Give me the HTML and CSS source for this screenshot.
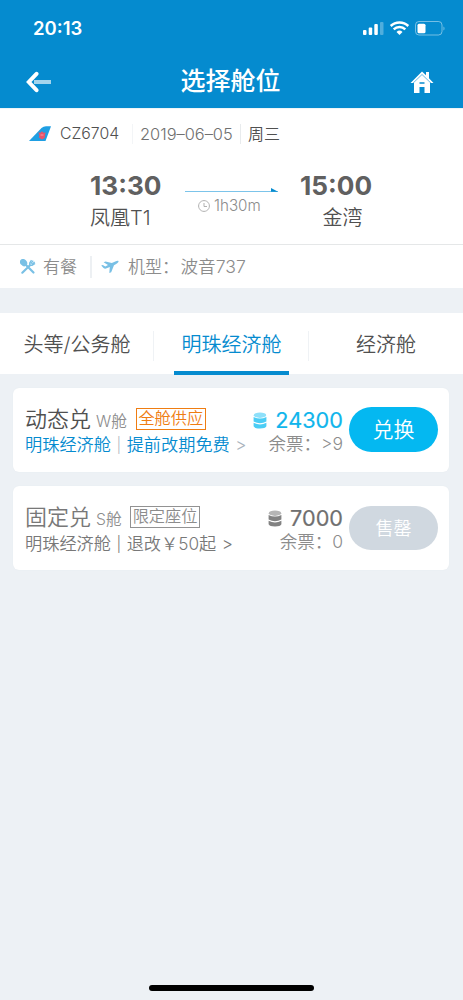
FILE: index.html
```html
<!DOCTYPE html>
<html lang="zh-CN">
<head>
<meta charset="utf-8">
<meta name="viewport" content="width=device-width, initial-scale=1">
<title>选择舱位</title>
<link rel="stylesheet" href="styles.css">
</head>
<body>
<div class="screen">
  <header class="header">
    <div class="status">
      <span class="clock">20:13</span>
      <svg class="status-icons" width="84" height="18" viewBox="0 0 84 18">
        <g fill="#fff">
          <rect x="1" y="11" width="3.500" height="5" rx="1"/>
          <rect x="6.700" y="8.500" width="3.500" height="7.500" rx="1"/>
          <rect x="12.300" y="5" width="3.500" height="11" rx="1"/>
          <rect x="18" y="3" width="3.500" height="13" rx="1" opacity=".3"/>
          <path d="M37.500 16l-3-3a4.300 4.300 0 0 1 6 0z"/>
          <rect x="55.500" y="4.700" width="8" height="9.500" rx="1.500"/>
          <path d="M81.500 7.500c1.300.6 1.300 3.400 0 4z" opacity=".5"/>
        </g>
        <path d="M28.700 7a12.500 12.500 0 0 1 17.600 0M31.700 10.300a8.300 8.300 0 0 1 11.600 0" fill="none" stroke="#fff" stroke-width="2.500"/>
        <rect x="53.500" y="2.500" width="26.500" height="13.500" rx="3.500" fill="none" stroke="#fff" stroke-opacity=".45"/>
      </svg>
    </div>
    <div class="nav">
      <svg class="nav-back" width="26" height="22" viewBox="0 0 26 22">
        <path d="M9 11h17" stroke="#a3d4ed" stroke-width="4"/>
        <path d="M11.500 2.800L3.800 11l7.700 8.200" fill="none" stroke="#fff" stroke-width="4" stroke-linecap="round" stroke-linejoin="miter"/>
      </svg>
      <h1 class="title">选择舱位</h1>
      <svg class="nav-home" width="24" height="24" viewBox="0 0 24 24">
        <path d="M.5 13L12 1.500l4 3.800V2h3v6.200l4.500 4.800z" fill="#fff"/>
        <path d="M4 12.600L12 5l8 7.600V23h-5.500v-6h-5v6H4z" fill="#fff"/>
        <path d="M3 13.200l9-8.700 9 8.700" fill="none" stroke="#058bcf" stroke-width=".6"/>
        <path d="M9.500 12h5v2h-5z" fill="#058bcf" opacity=".75"/>
      </svg>
    </div>
  </header>

  <section class="flight">
    <div class="flight-meta">
      <svg class="tail" width="23" height="16" viewBox="0 0 23 16">
        <path d="M0 15L12.500 2Q14.500.3 17 .3h5L16.500 15z" fill="#1f9fe3"/>
        <path d="M9.300 6.500l2.200.3L13 5.300l1.500 1.500 2.200-.3-.8 2.700.2 2-2.300 2h-1.700l-2.200-2 .6-2z" fill="#e9536a"/>
        <path d="M11.500 9h3" stroke="#f8bac3" stroke-width=".7"/>
      </svg>
      <span class="flight-no">CZ6704</span>
      <span class="flight-date">2019–06–05</span>
      <span class="flight-day">周三</span>
    </div>
    <div class="route">
      <div class="stop stop-from"><b class="time">13:30</b><span class="place">凤凰T1</span></div>
      <div class="leg">
        <svg class="leg-line" width="94" height="6" viewBox="0 0 94 6"><rect y="4" width="93" height="1" fill="#7cc4ea"/><path d="M86 1l7 3.700h-7z" fill="#058bcf"/></svg>
        <div class="duration">
          <svg width="12" height="12" viewBox="0 0 12 12"><path d="M6 3v3.500h3M6 .6a5.400 5.400 0 1 0 .01 0z" fill="none" stroke="#a8a8a8" stroke-width=".9"/></svg>
          <span>1h30m</span>
        </div>
      </div>
      <div class="stop stop-to"><b class="time">15:00</b><span class="place">金湾</span></div>
    </div>
    <div class="amenities">
      <svg class="meal-icon" width="16" height="16" viewBox="0 0 16 16" fill="none" stroke="#79c0e5">
        <path d="M5 5l8.500 8.500M2.300 13.700L10 6.300" stroke-width="2.200" stroke-linecap="round"/>
        <ellipse cx="3.600" cy="3.600" rx="3.900" ry="3.200" transform="rotate(45 3.600 3.600)" fill="#79c0e5" stroke="none"/>
        <path d="M11.500 1.200L9.700 4v2.400h2.400l3-1.900M13.200 1.700l-2.500 3M14.700 3l-3 2.500" stroke-width="1.300"/>
      </svg>
      <span class="meal">有餐</span>
      <svg class="plane-icon" width="18" height="14" viewBox="0 0 18 14"><path d="M.2 5.500l1.600-.5 2.500 1.400 2.700-1.300L2.600 2.300l2-.9 6.200 1.700C14 1.500 16.500.3 17.400 1c.8.9-1.400 2.600-4.400 4.200L10.200 12.300l-1.900.8.500-6-3.800 1.500q-1.500.4-2.500-.6z" fill="#79c0e5"/></svg>
      <span class="aircraft">机型：<span class="model">波音737</span></span>
    </div>
  </section>

  <nav class="tabs">
    <a class="tab">头等/公务舱</a>
    <a class="tab tab-active"><span>明珠经济舱</span></a>
    <a class="tab">经济舱</a>
  </nav>

  <main class="fares">
    <article class="fare">
      <div class="fare-info">
        <div class="fare-head"><span class="fare-name">动态兑</span><span class="fare-code">W舱</span><span class="tag">全舱供应</span></div>
        <div class="fare-rules"><span>明珠经济舱</span><span class="bar">|</span><span>提前改期免费</span><span class="more">&gt;</span></div>
      </div>
      <div class="fare-price">
        <div class="points">
          <svg width="14" height="17" viewBox="0 0 14 17"><ellipse cx="7" cy="3.200" rx="6.200" ry="2.700" fill="#8ee0fa"/><path d="M.6 5q6.400 3.200 12.800 0v4.500q-6.400 3.400-12.800 0zM.6 10.800q6.400 3.300 12.800 0v3.500q-1 2.200-6.400 2.200T.6 14.300z" fill="#4bcdf5"/></svg>
          <span>24300</span>
        </div>
        <div class="left">余票：<span>&gt;9</span></div>
      </div>
      <button class="redeem">兑换</button>
    </article>
    <article class="fare fare-soldout">
      <div class="fare-info">
        <div class="fare-head"><span class="fare-name">固定兑</span><span class="fare-code">S舱</span><span class="tag">限定座位</span></div>
        <div class="fare-rules"><span>明珠经济舱</span><span class="bar">|</span><span>退改￥50起</span><span class="more">&gt;</span></div>
      </div>
      <div class="fare-price">
        <div class="points">
          <svg width="14" height="17" viewBox="0 0 14 17"><ellipse cx="7" cy="3.200" rx="6.200" ry="2.700" fill="#b5b5b5"/><path d="M.6 5q6.400 3.200 12.800 0v4.500q-6.400 3.400-12.800 0zM.6 10.800q6.400 3.300 12.800 0v3.500q-1 2.200-6.400 2.200T.6 14.300z" fill="#828282"/></svg>
          <span>7000</span>
        </div>
        <div class="left">余票：<span>0</span></div>
      </div>
      <button class="redeem">售罄</button>
    </article>
  </main>
  <div class="home-indicator"></div>
</div>
</body>
</html>
```
FILE: styles.css
```css
* { box-sizing: border-box; }
body { margin: 0; }
.screen {
  width: 463px;
  height: 1000px;
  display: flex;
  flex-direction: column;
  overflow: hidden;
  background: #edf1f5;
  color: #505050;
  font-family: Inter, "Noto Sans CJK SC", sans-serif;
  font-weight: 350;
  white-space: nowrap;
}
svg { display: block; flex: none; }

.header { height: 108px; background: #058bcf; color: #fff; }
.status { height: 56px; display: flex; justify-content: space-between; align-items: center; padding: 0 17px 0 33px; }
.clock { font-size: 18.500px; font-weight: 600; }
.nav { height: 48px; display: flex; justify-content: space-between; align-items: center; padding: 3px 29px 0 25px; }
.title { margin: 0; font-size: 25px; line-height: 45px; font-weight: 500; }

.flight { height: 180px; background: #fff; border-top: 1px solid #eef5f8; }
.flight-meta { height: 49px; display: flex; align-items: center; padding-left: 29px; line-height: 20px; }
.flight-no { width: 73px; margin-left: 8px; font-size: 15.800px; border-right: 1px solid #f3f5f7; }
.flight-date { width: 108px; padding-left: 7px; font-size: 16.400px; font-weight: 300; color: #707070; border-right: 1px solid #e8ebed; }
.flight-day { margin-left: 7px; font-size: 16px; }
.route { height: 86px; display: grid; grid-template-columns: 161px 139px 72px; padding-top: 13px; }
.stop { display: flex; flex-direction: column; }
.stop-from { padding-left: 90px; }
.time { font-size: 26.200px; line-height: 30px; font-weight: 700; color: #606060; }
.place { font-size: 20px; line-height: 34px; }
.stop-to .place { text-align: center; padding-left: 13px; }
.leg { padding: 16px 0 0 24px; }
.duration { display: flex; align-items: center; gap: 4px; margin-left: 13px; padding-top: 2px; font-size: 15.200px; line-height: 21px; color: #8c8c8c; }
.amenities { height: 44px; display: flex; align-items: center; padding-left: 20px; border-top: 1px solid #e5e7e8; font-size: 17px; line-height: 22px; color: #8c8c8c; }
.meal { width: 49px; margin-left: 7px; border-right: 2px solid #edf0f3; }
.plane-icon { margin-left: 9px; }
.aircraft { margin-left: 9px; }
.model { margin-left: 1.500px; font-size: 17.600px; }

.tabs { height: 61px; margin-top: 25px; display: grid; grid-template-columns: 154px 155px 154px; background: #fff; font-size: 20px; line-height: 60px; text-align: center; }
.tab { display: flex; justify-content: center; align-items: center; padding-top: 2px; background: linear-gradient(#eff2f5, #eff2f5) right 18px / 1px 30px no-repeat; }
.tab:last-child { background: none; }
.tab-active { padding-top: 0; color: #058bcf; }
.tab-active span { width: 115px; height: 61px; line-height: 63px; border-bottom: 4px solid #058bcf; }

.fares { display: flex; flex-direction: column; gap: 15px; padding: 14px 14px 0 13px; }
.fare { height: 84px; display: grid; grid-template-columns: 225px 93px 89px; padding: 16px 11px 0 12px; background: #fff; border-radius: 6px; box-shadow: 0 0 1px #dfe5ea; }
.fare-head { height: 29px; display: flex; align-items: center; }
.fare-name { font-size: 22px; line-height: 30px; padding-top: 1px; }
.fare-code { margin-left: 5px; padding-top: 3px; font-size: 15.700px; color: #8c8c8c; }
.tag { height: 22px; margin-left: 9px; padding: 0 1.500px; border: 1px solid #ef7d12; color: #ef7d12; font-size: 16.200px; line-height: 19px; }
.fare-rules { display: flex; font-size: 17.200px; line-height: 24px; color: #058bcf; }
.bar { margin: 0 5.500px; color: #b4bac1; font-size: 15px; }
.more { margin-left: 5.500px; color: #aab3bd; }
.points { height: 32px; display: flex; justify-content: flex-end; align-items: center; gap: 8px; font-size: 21.700px; font-weight: 400; color: #10b5ec; -webkit-text-stroke: .2px; }
.left { height: 21px; font-size: 17.500px; line-height: 16px; color: #8c8c8c; text-align: right; }
.redeem { height: 45px; margin: 3px -6px 0 6px; padding: 0; border: 0; border-radius: 23px; background: #04b8f1; color: #fff; font: 350 21px/45px Inter, "Noto Sans CJK SC", sans-serif; }
.fare-soldout .fare-name, .fare-soldout .fare-rules, .fare-soldout .bar, .fare-soldout .more { color: #787878; }
.fare-soldout { margin-top: -1px; }
.fare-soldout .fare-rules { line-height: 25px; }
.fare-soldout .tag { margin-left: 8px; padding: 0 2px; color: #8c8c8c; border-color: #929292; }
.fare-soldout .points { color: #707070; }
.fare-soldout .redeem { height: 44px; margin-top: 4px; background: #d0d8e0; font-size: 18px; }

.home-indicator { width: 165px; height: 6px; margin: auto auto 9px; border-radius: 3px; background: #000; }
```
